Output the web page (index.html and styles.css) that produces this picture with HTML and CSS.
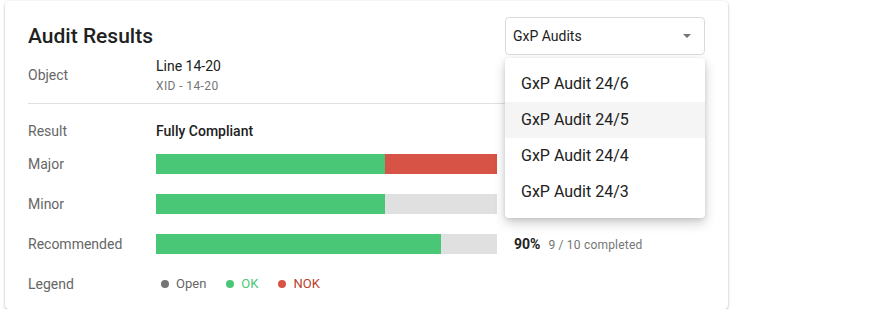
FILE: index.html
```html
<!DOCTYPE html>
<html lang="en">
<head>
<meta charset="utf-8">
<title>Audit Results</title>
<link rel="stylesheet" href="styles.css">
</head>
<body>
<div class="card">
  <div class="header">
    <h1 class="title">Audit Results</h1>
    <div class="select-wrap">
      <div class="select">
        <span class="select-text">GxP Audits</span>
        <span class="arrow"></span>
      </div>
      <ul class="menu">
        <li class="menu-item">GxP Audit 24/6</li>
        <li class="menu-item hover">GxP Audit 24/5</li>
        <li class="menu-item">GxP Audit 24/4</li>
        <li class="menu-item">GxP Audit 24/3</li>
      </ul>
    </div>
  </div>

  <div class="object-row">
    <div class="label">Object</div>
    <div class="value">
      <div class="value-main">Line 14-20</div>
      <div class="value-sub">XID - 14-20</div>
    </div>
  </div>

  <div class="divider"></div>

  <div class="rows">
    <div class="row result-row">
      <div class="label">Result</div>
      <div class="result">Fully Compliant</div>
    </div>
    <div class="row">
      <div class="label">Major</div>
      <div class="bar">
        <div class="seg ok" style="width: 67.2%"></div>
        <div class="seg nok" style="width: 32.8%"></div>
      </div>
    </div>
    <div class="row">
      <div class="label">Minor</div>
      <div class="bar">
        <div class="seg ok" style="width: 67.2%"></div>
      </div>
    </div>
    <div class="row">
      <div class="label">Recommended</div>
      <div class="bar">
        <div class="seg ok" style="width: 83.6%"></div>
      </div>
      <div class="stat"><span class="pct">90%</span><span class="count">9 / 10 completed</span></div>
    </div>
    <div class="row">
      <div class="label">Legend</div>
      <div class="legend">
        <span class="legend-item open"><span class="dot"></span>Open</span>
        <span class="legend-item okk"><span class="dot"></span>OK</span>
        <span class="legend-item nokk"><span class="dot"></span>NOK</span>
      </div>
    </div>
  </div>
</div>
</body>
</html>
```

FILE: styles.css
```css
* {
  box-sizing: border-box;
}

html, body {
  margin: 0;
  padding: 0;
  background: #ffffff;
}

body {
  font-family: Roboto, "Liberation Sans", Arial, sans-serif;
  color: #212121;
}

.card {
  margin: 1px 0 0 5px;
  width: 723px;
  height: 308px;
  padding: 0 23px 15px 23px;
  background: #ffffff;
  border-radius: 4px;
  box-shadow: 0 2px 3px rgba(0, 0, 0, 0.22), 0 0 2px rgba(0, 0, 0, 0.12);
}

.header {
  display: flex;
  align-items: center;
  justify-content: space-between;
  padding-top: 16px;
}

.title {
  margin: 0;
  font-size: 21px;
  line-height: 24px;
  font-weight: 500;
  color: #212121;
}

.select-wrap {
  position: relative;
  width: 200px;
}

.select {
  display: flex;
  align-items: center;
  justify-content: space-between;
  height: 38px;
  padding: 0 13px 0 7px;
  border: 1px solid #dadada;
  border-radius: 4px;
  font-size: 14px;
  color: #212121;
}

.arrow {
  width: 0;
  height: 0;
  border-left: 4px solid transparent;
  border-right: 4px solid transparent;
  border-top: 4px solid #757575;
}

.menu {
  position: absolute;
  left: 0;
  right: 0;
  top: calc(100% + 3px);
  margin: 0;
  padding: 8px 0;
  list-style: none;
  background: #ffffff;
  border-radius: 4px;
  box-shadow: 0 5px 12px rgba(0, 0, 0, 0.2), 0 1px 4px rgba(0, 0, 0, 0.1);
  z-index: 10;
}

.menu-item {
  height: 36px;
  line-height: 36px;
  padding-left: 16px;
  font-size: 16px;
  color: #212121;
}

.menu-item.hover {
  background: #f5f5f5;
}

.object-row {
  display: flex;
  align-items: center;
  margin-top: 1px;
  padding-bottom: 9px;
}

.label {
  width: 128px;
  flex: none;
  font-size: 14px;
  line-height: 20px;
  color: #666666;
}

.value-main {
  font-size: 14px;
  line-height: 20px;
  margin-bottom: 2px;
  color: #212121;
}

.value-sub {
  font-size: 12px;
  line-height: 16px;
  letter-spacing: 0.4px;
  color: #757575;
}

.divider {
  height: 1px;
  background: #e0e0e0;
}

.rows {
  display: flex;
  flex-direction: column;
  gap: 20px;
  padding-top: 17px;
}

.row {
  display: flex;
  align-items: center;
  height: 20px;
}

.result-row {
  margin-bottom: -7px;
}

.result {
  font-size: 14px;
  line-height: 20px;
  font-weight: 500;
  color: #212121;
}

.bar {
  display: flex;
  width: 341px;
  height: 20px;
  background: #e0e0e0;
  flex: none;
}

.seg {
  height: 100%;
}

.seg.ok {
  background: #4ac776;
}

.seg.nok {
  background: #d65345;
}

.stat {
  margin-left: 17px;
  display: flex;
  align-items: baseline;
}

.pct {
  font-size: 14px;
  font-weight: 700;
  color: #212121;
}

.count {
  margin-left: 8px;
  font-size: 12px;
  letter-spacing: 0.2px;
  color: #757575;
}

.legend {
  display: flex;
  align-items: center;
  font-size: 13px;
  line-height: 20px;
}

.legend-item {
  display: flex;
  align-items: center;
  margin-right: 15px;
}

.dot {
  width: 8px;
  height: 8px;
  border-radius: 50%;
  margin: 0 7px 0 5px;
}

.legend-item.open {
  color: #666666;
}

.legend-item.open .dot {
  background: #757575;
}

.legend-item.okk {
  color: #4ac776;
}

.legend-item.okk .dot {
  background: #4ac776;
}

.legend-item.nokk {
  color: #b8402f;
}

.legend-item.nokk .dot {
  background: #d65345;
}
```
